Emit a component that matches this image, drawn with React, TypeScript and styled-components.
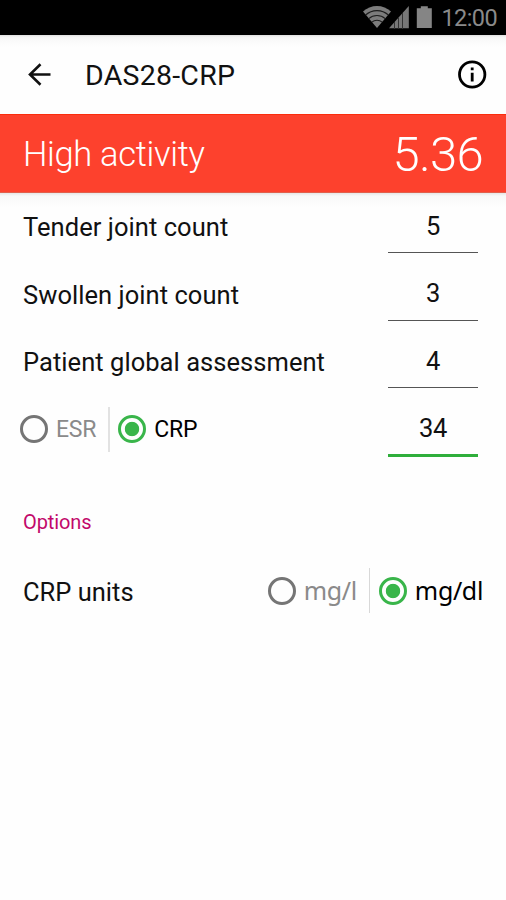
import React, { useState } from "react";
import styled, { createGlobalStyle } from "styled-components";

const GlobalStyle = createGlobalStyle`
  * { box-sizing: border-box; }
  body { margin: 0; background: #fff; }
`;

const Screen = styled.main`
  display: flex;
  flex-direction: column;
  width: 506px;
  height: 900px;
  overflow: hidden;
  background: #fefefe;
  color: #111;
  font-family: Roboto, "Noto Sans", sans-serif;
`;

const StatusBar = styled.header`
  display: flex;
  justify-content: flex-end;
  height: 35px;
  padding-right: 9px;
  background: #000;
  color: #8a8a8a;
`;

const StatusIcons = styled.svg`
  width: 72px;
  height: 35px;
  margin-right: 6px;
`;

const Clock = styled.time`
  font-size: 23.5px;
  line-height: 37px;
  letter-spacing: -0.6px;
`;

const AppBar = styled.nav`
  display: flex;
  align-items: center;
  height: 79px;
  padding: 0 19px 0 24px;
  background: linear-gradient(#dedede, #f4f4f4 2px, #fafafa 6px, #fefefe 12px);
`;

const IconButton = styled.button`
  display: flex;
  padding: 0;
  border: 0;
  background: none;
  color: #111;
`;

const Title = styled.h1`
  flex: 1;
  margin: 0 0 0 30px;
  font-size: 28.5px;
  font-weight: 400;
  line-height: 34px;
  padding-top: 3px;
  letter-spacing: 0.25px;
`;

const ResultBanner = styled.section`
  display: flex;
  justify-content: space-between;
  height: 79px;
  padding: 0 23px;
  border-top: 1px solid #fb2c0c;
  border-bottom: 1px solid #e0604c;
  background: #fd412d;
  color: #fff;
  font-weight: 300;
`;

const ResultLabel = styled.span`
  font-size: 34.5px;
  line-height: 79px;
  letter-spacing: -0.32px;
`;

const ResultScore = styled.output`
  font-size: 49px;
  line-height: 79px;
  letter-spacing: -0.7px;
`;

const Form = styled.section`
  padding: 0 23px;
  background: linear-gradient(#e6e6e6, #f8f8f8 3px, #fefefe 15px);
`;

const Row = styled.div`
  display: flex;
  justify-content: space-between;
  height: 67.5px;
  padding-right: 5px;
`;

const Label = styled.label`
  font-size: 25.5px;
  line-height: 69px;
  letter-spacing: 0.05px;
`;

const Value = styled.input<{ $active?: boolean }>`
  width: 90px;
  height: ${(p) => (p.$active ? 61 : 60)}px;
  padding: 6px 0 0;
  border: 0;
  border-bottom: ${(p) => (p.$active ? "3px solid #2fae3b" : "1px solid #555")};
  border-radius: 0;
  outline: 0;
  background: transparent;
  color: #111;
  font: 400 25.5px Roboto, sans-serif;
  letter-spacing: -0.4px;
  text-align: center;
`;

const RadioGroup = styled.div<{ $wide?: boolean }>`
  display: flex;
  align-items: center;
  height: 45px;
  margin: ${(p) => (p.$wide ? "0" : "11px 0 0 -3px")};
`;

const Option = styled.button<{ $on: boolean; $units?: boolean }>`
  display: flex;
  align-items: center;
  gap: 8px;
  padding: 0;
  border: 0;
  background: none;
  color: ${(p) => (p.$on ? "#000" : "#8a8a8a")};
  font: 400 ${(p) => (p.$units ? "25px 'Noto Sans'" : "23px Roboto")}, sans-serif;
  line-height: 45px;
  letter-spacing: ${(p) => (p.$units ? -0.35 : -0.2)}px;
`;

const Dot = styled.span<{ $on: boolean }>`
  width: 28px;
  height: 28px;
  border: 3px solid ${(p) => (p.$on ? "#39b54a" : "#757575")};
  border-radius: 50%;
  background: ${(p) => (p.$on ? "radial-gradient(circle, #39b54a 6.8px, transparent 7.6px)" : "none")};
`;

const Divider = styled.span<{ $wide?: boolean }>`
  width: ${(p) => (p.$wide ? 1 : 2)}px;
  height: 45px;
  margin: 0 ${(p) => (p.$wide ? 9 : 8)}px 0 12px;
  background: ${(p) => (p.$wide ? "#d8d8d8" : "#e2e2e2")};
`;

const Options = styled.section`
  padding: 45px 23px 0;
`;

const OptionsHeading = styled.h2`
  margin: 0;
  color: #c2086a;
  font-size: 20px;
  font-weight: 400;
  line-height: 28px;
  letter-spacing: -0.1px;
`;

const OptionsRow = styled.div`
  display: flex;
  justify-content: space-between;
  margin-top: 32px;
`;

const OptionsLabel = styled.span`
  font-size: 25.5px;
  line-height: 48px;
`;

const joints = [
  ["Tender joint count", "5"],
  ["Swollen joint count", "3"],
  ["Patient global assessment", "4"],
];

function Choice({ items, value, onChange, units }: {
  items: [string, string];
  value: string;
  onChange: (v: string) => void;
  units?: boolean;
}) {
  return (
    <RadioGroup role="radiogroup" $wide={units}>
      {items.map((item, i) => (
        <React.Fragment key={item}>
          {i > 0 && <Divider $wide={units} />}
          <Option role="radio" aria-checked={value === item} $on={value === item} $units={units} onClick={() => onChange(item)}>
            <Dot $on={value === item} />
            {item}
          </Option>
        </React.Fragment>
      ))}
    </RadioGroup>
  );
}

export default function App() {
  const [marker, setMarker] = useState("CRP");
  const [unit, setUnit] = useState("mg/dl");
  return (
    <Screen>
      <GlobalStyle />
      <StatusBar>
        <StatusIcons viewBox="0 0 72 35">
          <path d="M0 11.6a20.5 20.5 0 0 1 28 0L14 28z" fill="#7c7c7c" />
          <g fill="none" stroke="#1c1c1c" strokeWidth="1.1">
            <path d="M2.6 15a17 17 0 0 1 22.8 0" />
            <path d="M5.8 18.6a12.2 12.2 0 0 1 16.4 0" />
            <path d="M8.8 22.2a7.8 7.8 0 0 1 10.4 0" />
          </g>
          <path d="M26 28.3L45.8 6v22.3z" fill="#777" />
          <path d="M31.5 22v7M35.5 17.5v11M39.5 13v16" stroke="#333" strokeWidth="1" />
          <path d="M53.8 8.3h4V6.2h7v2.1h4V28h-15z" fill="#858585" />
        </StatusIcons>
        <Clock>12:00</Clock>
      </StatusBar>
      <AppBar>
        <IconButton aria-label="Back">
          <svg width="31" height="28" viewBox="0 0 31 28" fill="none" stroke="currentColor" strokeWidth="2.6">
            <path d="M26.5 13.5H6M16.5 3.3L6 13.5l10.5 10.2" />
          </svg>
        </IconButton>
        <Title>DAS28-CRP</Title>
        <IconButton aria-label="Information">
          <svg width="30" height="30" viewBox="0 0 30 30" fill="none" stroke="#000" strokeWidth="2.8">
            <circle cx="15.2" cy="14.5" r="12.7" />
            <path d="M15.2 12.8v8.7M15.2 7.5v2.8" />
          </svg>
        </IconButton>
      </AppBar>
      <ResultBanner>
        <ResultLabel>High activity</ResultLabel>
        <ResultScore>5.36</ResultScore>
      </ResultBanner>
      <Form>
        {joints.map(([label, value]) => (
          <Row key={label}>
            <Label>{label}</Label>
            <Value aria-label={label} defaultValue={value} />
          </Row>
        ))}
        <Row>
          <Choice items={["ESR", "CRP"]} value={marker} onChange={setMarker} />
          <Value $active aria-label={marker} defaultValue="34" />
        </Row>
      </Form>
      <Options>
        <OptionsHeading>Options</OptionsHeading>
        <OptionsRow>
          <OptionsLabel>CRP units</OptionsLabel>
          <Choice units items={["mg/l", "mg/dl"]} value={unit} onChange={setUnit} />
        </OptionsRow>
      </Options>
    </Screen>
  );
}
